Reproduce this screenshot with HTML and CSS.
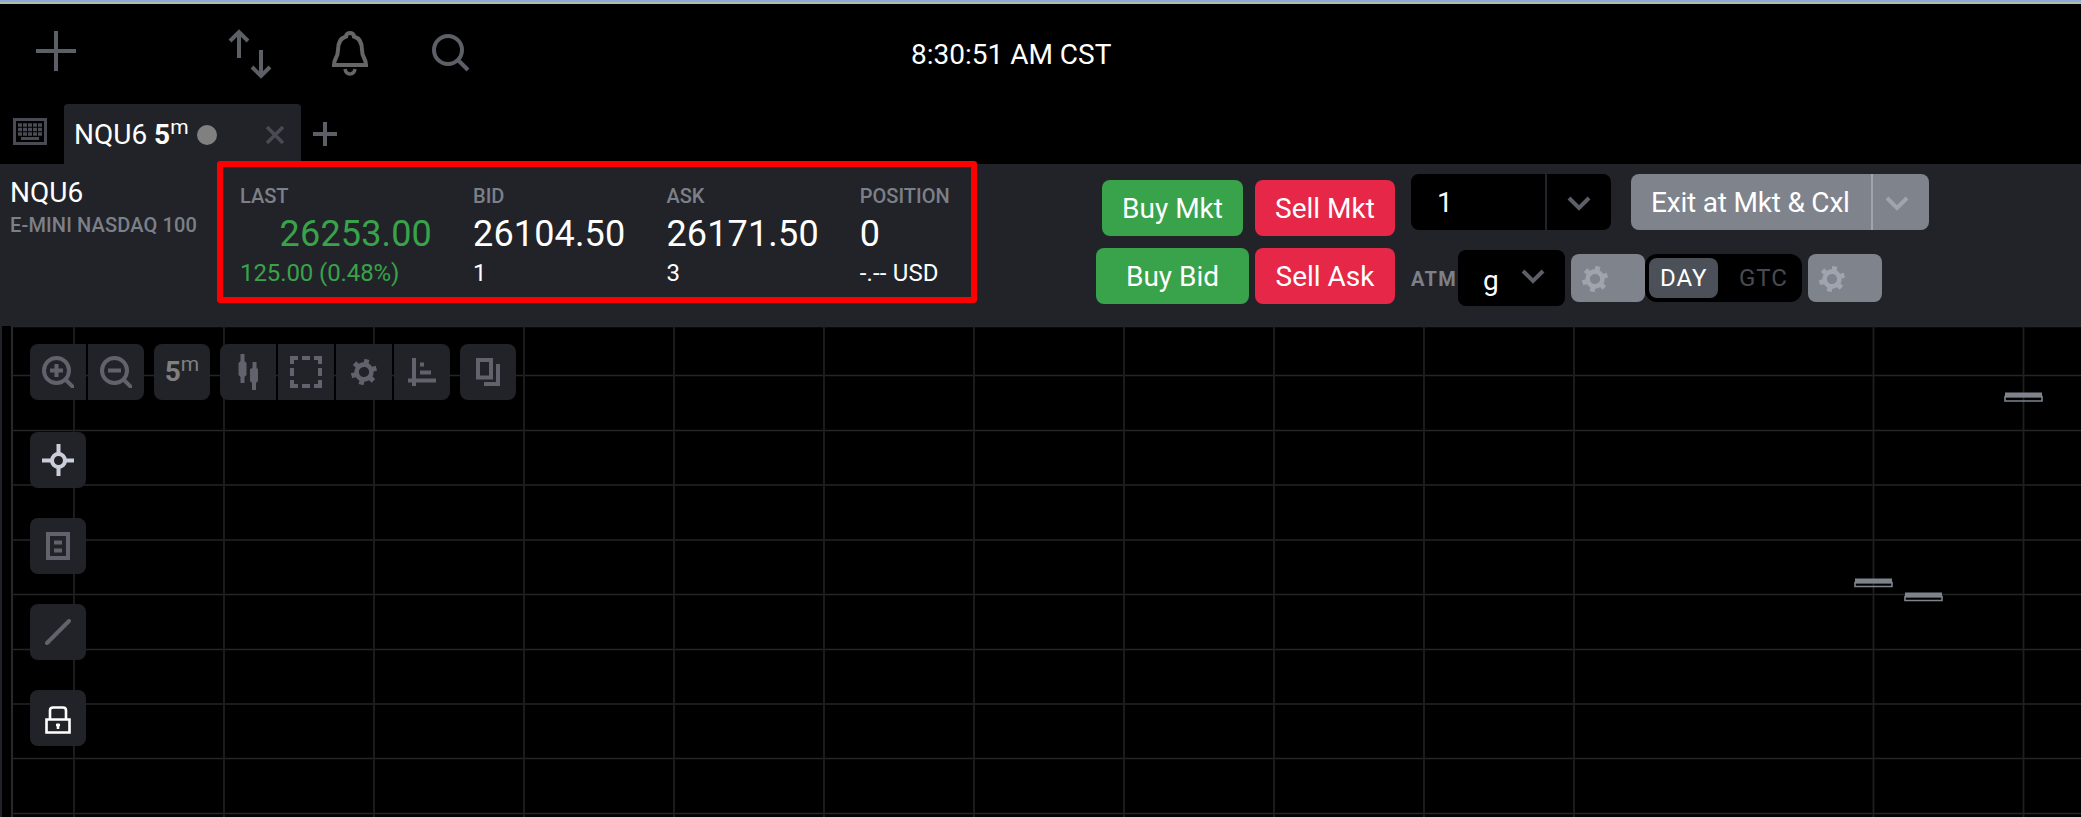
FILE: index.html
```html
<!DOCTYPE html>
<html lang="en">
<head>
  <meta charset="UTF-8">
  <meta name="viewport" content="width=device-width, initial-scale=1.0">
  <title>NQU6 5m</title>
  <link rel="stylesheet" href="styles.css">
</head>
<body>
  <svg class="defs" width="0" height="0">
    <symbol id="gear" viewBox="0 0 26 26">
      <g fill="none" stroke="currentColor" transform="rotate(13 13 13)">
        <circle cx="13" cy="13" r="7.4" stroke-width="4.6"/>
        <path d="M13 0v5M13 21v5M1.74 6.5l4.3 2.5M19.9 17l4.3 2.5M1.74 19.5l4.3-2.5M19.9 9l4.3-2.5" stroke-width="5"/>
      </g>
    </symbol>
    <symbol id="chevron" viewBox="0 0 24 16">
      <path d="M2 2l10 10 10-10" fill="none" stroke="currentColor" stroke-width="4"/>
    </symbol>
  </svg>

  <header class="topbar">
    <div class="left">
      <svg class="add" width="40" height="40"><path d="M20 0v40M0 20h40" stroke="#5c5f66" stroke-width="4"/></svg>
      <svg class="transfer" width="44" height="50" fill="none" stroke="#5c5f66" stroke-width="4"><path d="M11 29V3M2 12l9-9 9 9M33 21v26M24 38l9 9 9-9"/></svg>
      <svg class="bell" width="36" height="45" fill="none" stroke="#666" stroke-width="4"><path d="M2 34h32c0-7-4-7-4-15 0-8-3-12-8-13.500C22 3 20 2 18 2s-4 1-4 3.500C9 7 6 11 6 19c0 8-4 8-4 15z"/><path d="M13 38c1 6.500 9 6.500 10 0" stroke-width="3.500"/></svg>
      <svg class="search" width="38" height="38" fill="none" stroke="#5c5f66" stroke-width="4"><circle cx="16" cy="16" r="14"/><path d="M26 26l10 10"/></svg>
    </div>
    <div class="clock">8:30:51 AM CST</div>
  </header>

  <nav class="tabs">
    <svg class="keyboard" width="34" height="27"><path d="M1.500 1.500h31v24h-31z" fill="none" stroke="#484b53" stroke-width="3"/><path d="M5 7h24M5 11.500h24M5 16h24" stroke="#484b53" stroke-width="3.300" stroke-dasharray="4 1"/><path d="M8 20.500h18" stroke="#484b53" stroke-width="3"/></svg>
    <div class="tab">
      <span>NQU6 <b>5</b><span class="unit">m</span></span>
      <i class="dot"></i>
      <svg class="close" width="18" height="18"><path d="M1 1l16 16M17 1L1 17" stroke="#484b53" stroke-width="3.500"/></svg>
    </div>
    <svg class="new-tab" width="24" height="24"><path d="M12 0v24M0 12h24" stroke="#5c5f66" stroke-width="4"/></svg>
  </nav>

  <section class="toolbar">
    <div class="symbol">
      <div class="name">NQU6</div>
      <div class="label">E-MINI NASDAQ 100</div>
    </div>
    <div class="quotes">
      <div class="quote up last">
        <div class="label">LAST</div>
        <div class="price">26253.00</div>
        <div class="sub">125.00 (0.48%)</div>
      </div>
      <div class="quote">
        <div class="label">BID</div>
        <div class="price">26104.50</div>
        <div class="sub">1</div>
      </div>
      <div class="quote">
        <div class="label">ASK</div>
        <div class="price">26171.50</div>
        <div class="sub">3</div>
      </div>
      <div class="quote">
        <div class="label">POSITION</div>
        <div class="price">0</div>
        <div class="sub position">-.-- USD</div>
      </div>
    </div>
    <div class="orders">
      <button class="btn buy mkt">Buy Mkt</button>
      <button class="btn sell">Sell Mkt</button>
      <button class="btn buy">Buy Bid</button>
      <button class="btn sell">Sell Ask</button>
    </div>
    <div class="controls">
      <div class="row">
        <div class="qty">
          <span>1</span>
          <div class="drop"><svg width="24" height="16"><use href="#chevron"/></svg></div>
        </div>
        <div class="exit">
          <span>Exit at Mkt &amp; Cxl</span>
          <div class="drop"><svg width="24" height="16"><use href="#chevron"/></svg></div>
        </div>
      </div>
      <div class="row second">
        <span class="label atm">ATM</span>
        <div class="strategy"><span>g</span><svg width="24" height="16"><use href="#chevron"/></svg></div>
        <button class="settings"><svg width="26" height="26"><use href="#gear"/></svg></button>
        <div class="tif"><span class="on">DAY</span><span>GTC</span></div>
        <button class="settings"><svg width="26" height="26"><use href="#gear"/></svg></button>
      </div>
    </div>
    <div class="highlight"></div>
  </section>

  <main class="chart">
    <svg class="plot" width="2081" height="491" viewBox="0 326 2081 491">
      <path d="M12 326v491" stroke="#29292b" stroke-width="2"/>
      <path d="M12 326.500H2081M12 375.500H2081M12 430.500H2081M12 485H2081M12 540H2081M12 594.500H2081M12 649.500H2081M12 704H2081M12 758.500H2081M12 813.500H2081" stroke="#252525" stroke-width="1.400"/>
      <path d="M74 326v491M224 326v491M374 326v491M524 326v491M674 326v491M824 326v491M974 326v491M1124 326v491M1274 326v491M1424 326v491M1574 326v491M1873.500 326v491M2023.500 326v491" stroke="#1f1f1f" stroke-width="1.800"/>
      <g fill="#7e838c">
        <path d="M2005 392.500h37v5h-37zM1855 578.500h37v5h-37zM1905 592.500h37v5h-37z"/>
      </g>
      <path d="M2005 396.500h37v4.500h-37zM1855 582.500h37v4h-37zM1905 596.500h37v4h-37z" fill="none" stroke="#7e838c" stroke-width="1.600"/>
    </svg>

    <div class="tools">
      <div class="group">
        <button><svg width="32" height="32" fill="none" stroke="#60636c" stroke-width="4"><circle cx="14.500" cy="14.500" r="12.500"/><path d="M24 24l8 8M14.500 8v13M8 14.500h13"/></svg></button>
        <button><svg width="32" height="32" fill="none" stroke="#60636c" stroke-width="4"><circle cx="14.500" cy="14.500" r="12.500"/><path d="M24 24l8 8M8 14.500h13"/></svg></button>
      </div>
      <div class="group">
        <button class="interval"><span><b>5</b><span class="unit">m</span></span></button>
      </div>
      <div class="group">
        <button><svg width="20" height="36" fill="#60636c"><path d="M2.500 0h4v7l2 2v12l-2 2v6h-4v-6l-2-2V9l2-2zM14.500 8h4v6l1.500 1v12l-2 2v7h-4v-7l-2-2V15l2.500-1z"/></svg></button>
        <button><svg width="32" height="32" fill="none" stroke="#60636c" stroke-width="4"><path d="M2 8V2h6M24 2h6v6M30 24v6h-6M8 30H2v-6M12 2h8M12 30h8M2 12v8M30 12v8"/></svg></button>
        <button><svg class="dim" width="26" height="26"><use href="#gear"/></svg></button>
        <button><svg width="28" height="28" fill="none" stroke="#60636c" stroke-width="4"><path d="M6 0v28M0 22.500h28M12 14.500h11M12 6.500h4"/></svg></button>
      </div>
      <div class="group">
        <button><svg width="24" height="28" fill="none" stroke="#60636c" stroke-width="4"><path d="M2 2h13v17.500H2zM22 6v20H8"/></svg></button>
      </div>
    </div>

    <div class="drawing">
      <button><svg width="32" height="32" fill="none" stroke="#c9ced9" stroke-width="4"><circle cx="16.500" cy="16.500" r="6.500"/><path d="M16.500 0v9M16.500 24v8M0 16.500h9M24 16.500h8"/></svg></button>
      <button><svg width="24" height="28" fill="none" stroke="#60636c" stroke-width="4"><path d="M2 2h20v24H2zM8 10.500h8M8 18.500h8"/></svg></button>
      <button><svg width="26" height="26"><path d="M2 24L24 2" stroke="#60636c" stroke-width="4" stroke-linecap="round"/></svg></button>
      <button><svg class="lock" width="26" height="28" fill="none" stroke="#fff" stroke-width="2.600"><path d="M5 13V4.500Q5 1.500 8 1.500h10q3 0 3 3V13"/><path d="M1.500 13.500h23v13h-23z"/><path d="M13 17.500v5.500M11 19h4"/></svg></button>
    </div>
  </main>
</body>
</html>
```

FILE: styles.css
```css
* {
  box-sizing: border-box;
}
body {
  margin: 0;
  height: 817px;
  overflow: hidden;
  background: #000;
  color: #fff;
  font-family: Roboto, sans-serif;
  font-size: 28px;
  line-height: 32px;
}
svg {
  display: block;
  flex: none;
}
button {
  display: flex;
  align-items: center;
  justify-content: center;
  padding: 0;
  border: none;
  color: inherit;
  font: inherit;
}
.defs {
  position: absolute;
}

/* header */
.topbar {
  display: flex;
  height: 104px;
  border-top: 2px solid #8eabe0;
  box-shadow: inset 0 2px #b3bda0;
}
.left {
  display: flex;
  align-items: flex-start;
  width: 911px;
  padding-left: 36px;
}
.add { margin-top: 29px; }
.transfer { margin: 27px 0 0 152px; }
.bell { margin: 29px 0 0 60px; }
.search { margin: 32px 0 0 64px; }
.clock {
  padding-top: 37px;
}

/* tabs */
.tabs {
  display: flex;
  height: 60px;
  padding-left: 13px;
}
.keyboard { margin: 14px 17px 0 0; }
.tab {
  display: flex;
  align-items: center;
  width: 237px;
  padding: 1px 17px 0 10px;
  border-radius: 4px 4px 0 0;
  background: #222328;
}
.unit {
  position: relative;
  top: -10px;
  font-size: 21px;
  line-height: 1;
}
.dot {
  width: 20px;
  height: 20px;
  margin-left: 8px;
  border-radius: 50%;
  background: #808080;
}
.close { margin-left: auto; }
.new-tab { margin: 18px 0 0 12px; }

/* order toolbar */
.toolbar {
  position: relative;
  display: flex;
  height: 162px;
  background: #222328;
}
.symbol {
  width: 230px;
  padding: 13px 0 0 10px;
}
.label {
  color: #7c8089;
  font-size: 20px;
  font-weight: 500;
  line-height: 24px;
}
.symbol .label {
  margin-top: 4px;
  letter-spacing: 0.14px;
}
.quotes {
  display: flex;
  gap: 41px;
  width: 866px;
  padding: 20px 0 0 10px;
}
.last { width: 192px; }
.last .price { text-align: right; }
.price {
  margin-top: 5px;
  font-size: 36px;
  line-height: 42px;
  letter-spacing: 0.16px;
}
.sub {
  margin-top: 4px;
  font-size: 24px;
  line-height: 28px;
}
.last .sub { letter-spacing: -0.1px; }
.position { letter-spacing: 0.15px; }
.up .price, .up .sub {
  color: #38a34a;
}
.highlight {
  position: absolute;
  left: 217px;
  top: -3px;
  width: 760px;
  height: 142px;
  border: 6px solid #f00;
  border-radius: 3px;
}
.orders {
  display: grid;
  grid-template-columns: 153px 140px;
  grid-auto-rows: 56px;
  gap: 12px 6px;
  padding-top: 16px;
}
.btn {
  padding-top: 2px;
  border-radius: 8px;
}
.buy { background: #38a34a; }
.sell { background: #e62747; }
.mkt { margin: 0 6px; }
.controls {
  padding: 10px 0 0 16px;
}
.row {
  display: flex;
  align-items: center;
}
.second { margin-top: 20px; }
.qty, .exit {
  display: flex;
  align-items: center;
  height: 56px;
  border-radius: 8px;
}
.qty {
  width: 200px;
  margin-right: 20px;
  padding-left: 26px;
  background: #000;
  color: #5c5f66;
}
.qty span, .exit span { padding-top: 2px; }
.qty span { color: #fff; }
.drop {
  display: flex;
  align-items: center;
  height: 56px;
  margin-left: auto;
  padding-top: 4px;
  border-left: 2px solid #222328;
}
.qty .drop {
  width: 66px;
  padding-left: 20px;
}
.exit {
  width: 298px;
  padding-left: 20px;
  background: #7f838c;
}
.exit span { letter-spacing: -0.2px; }
.exit .drop {
  width: 58px;
  padding-left: 12px;
  border-color: #a0a4ae;
  color: #a0a4ae;
}
.atm {
  width: 47px;
  padding-top: 1px;
  font-weight: 700;
  letter-spacing: 1.3px;
}
.strategy {
  display: flex;
  width: 107px;
  height: 56px;
  padding: 17px 20px 0 25px;
  border-radius: 8px;
  background: #000;
}
.strategy svg {
  margin: 2px 0 0 auto;
  color: #5c5f66;
}
.strategy span { line-height: 28px; }
.settings {
  width: 74px;
  height: 48px;
  margin-left: 6px;
  padding: 2px 0 0 11px;
  justify-content: flex-start;
  border-radius: 8px;
  background: #7f838c;
  color: #a0a4ae;
}
.strategy + .settings { width: 74px; }
.tif {
  display: flex;
  width: 157px;
  height: 48px;
  padding: 4px;
  border-radius: 12px;
  background: #000;
  color: #484b53;
  font-size: 24px;
  letter-spacing: 1px;
}
.tif span {
  padding-left: 21px;
  line-height: 40px;
}
.tif .on {
  width: 69px;
  padding-left: 11px;
  border-radius: 8px;
  background: #4c5059;
  color: #fff;
}

/* chart */
.chart {
  position: relative;
  height: 491px;
  border-left: 2px solid #222328;
}
.plot { margin-left: -2px; }
.tools, .drawing {
  position: absolute;
  left: 28px;
  display: flex;
}
.tools {
  top: 18px;
  gap: 10px;
}
.drawing {
  top: 106px;
  flex-direction: column;
  gap: 30px;
}
.group {
  display: flex;
  gap: 2px;
}
.chart button {
  width: 56px;
  height: 56px;
  background: #222328;
}
.group button:first-child {
  border-radius: 8px 0 0 8px;
}
.group button:last-child {
  border-radius: 0 8px 8px 0;
}
.group button:only-child, .drawing button {
  border-radius: 8px;
}
.interval { color: #808080; }
.lock { margin-top: 4px; }
.dim { color: #60636c; }
```
